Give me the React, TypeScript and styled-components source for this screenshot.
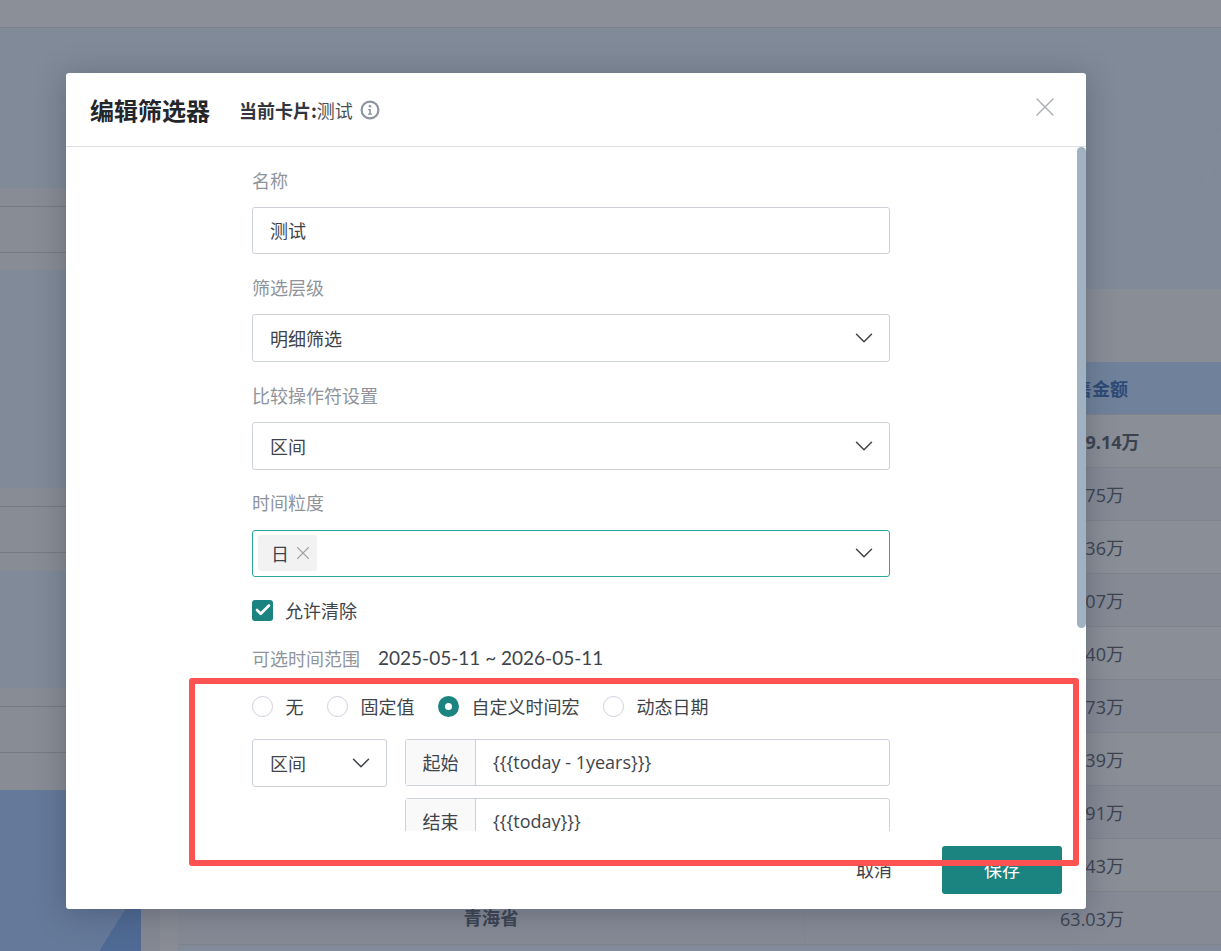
import styled, { createGlobalStyle } from "styled-components";
import { X, ChevronDown, Check } from "lucide-react";

const GlobalStyle = createGlobalStyle`
  html, body {
    margin: 0;
    padding: 0;
    height: 100%;
    overflow: hidden;
    font-family: "Noto Sans CJK SC", "Open Sans", sans-serif;
  }
`;

const rows = [
  { amount: "11739.14万", bold: true },
  { amount: "98.75万" },
  { amount: "86.36万" },
  { amount: "85.07万" },
  { amount: "80.40万" },
  { amount: "76.73万" },
  { amount: "70.39万" },
  { amount: "68.91万" },
  { amount: "65.43万" },
  { amount: "63.03万", province: "青海省" },
];

const Page = styled.div`
  position: relative;
  width: 1221px;
  height: 951px;
  overflow: hidden;
  background: #808a98;
  display: flex;
  flex-direction: column;
`;

const TopBar = styled.div`
  height: 27px;
  flex: none;
  background: #8b8f98;
  border-bottom: 1px solid #7d818a;
`;

const Backdrop = styled.div`
  flex: 1;
  display: flex;
  min-height: 0;
`;

const LeftSide = styled.div`
  width: 141px;
  flex: none;
  display: flex;
  flex-direction: column;
`;

const Band = styled.div<{ $top: number; $height: number }>`
  height: ${(p) => p.$height}px;
  flex: none;
  box-sizing: border-box;
  margin-top: ${(p) => p.$top}px;
  padding-top: 18px;
  background: #888c94;
`;

const BandRow = styled.div`
  height: 47px;
  box-sizing: border-box;
  border-top: 1px solid #767a83;
  border-bottom: 1px solid #767a83;
`;

const LeftChart = styled.div`
  flex: 1;
  background: linear-gradient(122deg, #65799a 0 82.7%, #4f6a94 82.7%);
`;

const Gutter = styled.div`
  width: 37px;
  flex: none;
  background: linear-gradient(90deg, #848892 0 19px, #898c94 19px);
  margin-top: 861px;
`;

const MainSide = styled.div`
  position: relative;
  flex: 1;
  display: flex;
  flex-direction: column;
  padding-top: 261px;
`;

const ChartLine = styled.svg`
  position: absolute;
  right: 0;
  top: 80px;
`;

const TableTitle = styled.div`
  height: 73px;
  flex: none;
  background: #898d96;
`;

const TableRow = styled.div<{ $head?: boolean; $shade?: boolean }>`
  height: 53px;
  flex: none;
  box-sizing: border-box;
  display: grid;
  grid-template-columns: 627px 158px 258px;
  align-items: center;
  text-align: center;
  font-family: "Open Sans", "Noto Sans CJK SC", sans-serif;
  font-size: 18px;
  color: ${(p) => (p.$head ? "#2e4a75" : "#3c4350")};
  font-weight: ${(p) => (p.$head ? 700 : 400)};
  background: ${(p) => (p.$head ? "#70829b" : p.$shade ? "#858a95" : "#8a8e97")};
  border-bottom: 1px solid #7f838c;
  white-space: nowrap;
`;

const ProvinceCell = styled.div`
  font-size: 18.4px;
  font-weight: 700;
  border-right: 1px solid #82868f;
  line-height: 52px;
`;

const AmountCell = styled.div<{ $bold?: boolean }>`
  grid-column: 3;
  font-weight: ${(p) => (p.$bold ? 700 : "inherit")};
`;

const Modal = styled.div`
  position: absolute;
  left: 66px;
  top: 73px;
  width: 1020px;
  height: 836px;
  background: #fff;
  border-radius: 3px;
  box-shadow: 0 4px 30px rgba(40, 50, 70, 0.35);
  display: flex;
  flex-direction: column;
  overflow: hidden;
`;

const ModalHeader = styled.div`
  height: 74px;
  flex: none;
  box-sizing: border-box;
  border-bottom: 1px solid #dcdfe6;
  padding: 0 24px;
  display: flex;
  align-items: center;
`;

const Title = styled.div`
  font-size: 24px;
  font-weight: 700;
  color: #23262b;
`;

const CardLabel = styled.div`
  margin-left: 29px;
  font-size: 18px;
  font-weight: 700;
  color: #33373d;
`;

const CardName = styled.span`
  font-weight: 400;
  color: #4a4f57;
`;

const InfoMark = styled.svg`
  margin-left: 7px;
  flex: none;
`;

const CloseMark = styled(X)`
  margin-left: auto;
  margin-top: -5px;
  margin-right: 1px;
  color: #aaadb2;
`;

const ModalBody = styled.div`
  position: relative;
  height: 684px;
  flex: none;
  box-sizing: border-box;
  overflow: hidden;
  padding: 21.5px 196px 0 186px;
`;

const ScrollThumb = styled.div`
  position: absolute;
  right: 0;
  top: 0;
  width: 9px;
  height: 481px;
  border-radius: 5px;
  background: #a2b1c1;
`;

const Label = styled.div`
  font-size: 18px;
  line-height: 22px;
  color: #8f949c;
  margin-bottom: 16.1px;
`;

const Field = styled.div<{ $active?: boolean }>`
  box-sizing: border-box;
  height: 47.6px;
  padding: 0 17px;
  border: 1px solid ${(p) => (p.$active ? "#2aa79c" : "#cdd1dc")};
  border-radius: 3px;
  display: flex;
  align-items: center;
  justify-content: space-between;
  font-size: 18px;
  color: #3f444b;
  margin-bottom: 21.97px;
`;

const TagField = styled(Field)`
  padding: 0 17px 0 5px;
  margin-bottom: 20.3px;
`;

const Tag = styled.div`
  height: 36px;
  width: 59px;
  box-sizing: border-box;
  padding-left: 13px;
  border-radius: 3px;
  background: #f2f2f3;
  display: flex;
  align-items: center;
`;

const TagClose = styled(X)`
  color: #a0a3a8;
  flex: none;
  margin-left: 3px;
  margin-right: -10px;
`;

const Chevron = styled(ChevronDown)`
  color: #3f444b;
  flex: none;
  margin-right: -6.5px;
`;

const CheckRow = styled.div`
  display: flex;
  align-items: center;
  gap: 12px;
  height: 26px;
  font-size: 18px;
  color: #3f444b;
  margin-bottom: 22.5px;
`;

const CheckBox = styled.div`
  width: 21px;
  height: 21px;
  border-radius: 3px;
  background: #1b8480;
  color: #fff;
  display: flex;
  align-items: center;
  justify-content: center;
`;

const RangeRow = styled.div`
  display: flex;
  align-items: center;
  gap: 18px;
  height: 24px;
  font-size: 18px;
  color: #8f949c;
  margin-bottom: 24.5px;
`;

const RangeValue = styled.span`
  font-family: "Lato", "Noto Sans CJK SC", sans-serif;
  font-size: 19px;
  color: #3f444b;
`;

const RadioRow = styled.div`
  display: flex;
  align-items: center;
  height: 24px;
  font-size: 18px;
  color: #3f444b;
  margin-bottom: 20.5px;
`;

const RadioItem = styled.div`
  display: flex;
  align-items: center;
  gap: 12.5px;
  margin-right: 23.5px;
`;

const Radio = styled.div<{ $on?: boolean }>`
  width: 21px;
  height: 21px;
  box-sizing: border-box;
  border-radius: 50%;
  ${(p) =>
    p.$on
      ? "background: #1b8480; display: flex; align-items: center; justify-content: center;"
      : "border: 1px solid #cdd1dc;"}
`;

const RadioDot = styled.div`
  width: 7px;
  height: 7px;
  border-radius: 50%;
  background: #fff;
`;

const MacroRow = styled.div`
  display: flex;
  gap: 18px;
  align-items: flex-start;
`;

const OperatorSelect = styled(Field)`
  width: 135px;
  flex: none;
  height: 48px;
  margin-bottom: 0;
`;

const MacroInputs = styled.div`
  flex: 1;
  display: flex;
  flex-direction: column;
  gap: 12px;
`;

const AddonInput = styled.div`
  height: 47px;
  box-sizing: border-box;
  flex: none;
  border: 1px solid #cdd1dc;
  border-radius: 3px;
  display: flex;
  font-size: 18px;
  color: #3f444b;
`;

const Addon = styled.div`
  width: 70px;
  flex: none;
  box-sizing: border-box;
  background: #f9f9fa;
  border-right: 1px solid #cdd1dc;
  display: flex;
  align-items: center;
  justify-content: center;
`;

const AddonValue = styled.div`
  flex: 1;
  padding-left: 17px;
  display: flex;
  align-items: center;
  font-family: "Open Sans", "Noto Sans CJK SC", sans-serif;
`;

const ModalFooter = styled.div`
  flex: 1;
  display: flex;
  align-items: center;
  justify-content: flex-end;
  gap: 50px;
  padding-right: 24px;
  font-size: 18px;
`;

const CancelButton = styled.div`
  color: #3f444b;
  margin-top: -2px;
`;

const SaveButton = styled.div`
  width: 120px;
  height: 48px;
  box-sizing: border-box;
  padding-bottom: 2px;
  border-radius: 3px;
  background: #1b8480;
  color: #fff;
  display: flex;
  align-items: center;
  justify-content: center;
`;

const Highlight = styled.div`
  position: absolute;
  left: 189px;
  top: 678px;
  width: 890px;
  height: 188px;
  box-sizing: border-box;
  border: 6px solid #fd5252;
  border-radius: 3px;
`;

const SelectChevron = () => <Chevron size={30} strokeWidth={1.2} />;

export default function App() {
  return (
    <Page>
      <GlobalStyle />
      <TopBar />
      <Backdrop>
        <LeftSide>
          <Band $top={160} $height={82}>
            <BandRow />
          </Band>
          <Band $top={218} $height={83}>
            <BandRow />
          </Band>
          <Band $top={117} $height={102}>
            <BandRow />
          </Band>
          <LeftChart />
        </LeftSide>
        <Gutter />
        <MainSide>
          <ChartLine width="40" height="100" viewBox="0 0 40 100" fill="none">
            <path d="M40 25 Q30 50 24 85" stroke="#848d9b" strokeWidth="1" />
          </ChartLine>
          <TableTitle />
          <TableRow $head>
            <AmountCell>销售金额</AmountCell>
          </TableRow>
          {rows.map((r, i) => (
            <TableRow key={r.amount} $shade={i % 2 === 1}>
              {r.province && <ProvinceCell>{r.province}</ProvinceCell>}
              <AmountCell $bold={r.bold}>{r.amount}</AmountCell>
            </TableRow>
          ))}
        </MainSide>
      </Backdrop>
      <Modal>
        <ModalHeader>
          <Title>编辑筛选器</Title>
          <CardLabel>
            当前卡片:<CardName>测试</CardName>
          </CardLabel>
          <InfoMark width="20" height="20" viewBox="0 0 20 20" fill="none">
            <circle cx="10" cy="10" r="8.4" stroke="#8e94a0" strokeWidth="2.2" />
            <circle cx="10" cy="6.2" r="1.3" fill="#8e94a0" />
            <path d="M8.2 9h2.6v4.6h1.2v1.2H8v-1.2h1.2V10.2h-1z" fill="#8e94a0" />
          </InfoMark>
          <CloseMark size={32} strokeWidth={1.05} />
        </ModalHeader>
        <ModalBody>
          <ScrollThumb />
          <Label>名称</Label>
          <Field>测试</Field>
          <Label>筛选层级</Label>
          <Field>
            明细筛选
            <SelectChevron />
          </Field>
          <Label>比较操作符设置</Label>
          <Field>
            区间
            <SelectChevron />
          </Field>
          <Label>时间粒度</Label>
          <TagField $active>
            <Tag>
              日
              <TagClose size={22} strokeWidth={1.2} />
            </Tag>
            <SelectChevron />
          </TagField>
          <CheckRow>
            <CheckBox>
              <Check size={18} strokeWidth={3.5} />
            </CheckBox>
            允许清除
          </CheckRow>
          <RangeRow>
            可选时间范围
            <RangeValue>2025-05-11 ~ 2026-05-11</RangeValue>
          </RangeRow>
          <RadioRow>
            <RadioItem>
              <Radio />无
            </RadioItem>
            <RadioItem>
              <Radio />固定值
            </RadioItem>
            <RadioItem>
              <Radio $on>
                <RadioDot />
              </Radio>
              自定义时间宏
            </RadioItem>
            <RadioItem>
              <Radio />动态日期
            </RadioItem>
          </RadioRow>
          <MacroRow>
            <OperatorSelect>
              区间
              <SelectChevron />
            </OperatorSelect>
            <MacroInputs>
              <AddonInput>
                <Addon>起始</Addon>
                <AddonValue>{"{{{today - 1years}}}"}</AddonValue>
              </AddonInput>
              <AddonInput>
                <Addon>结束</Addon>
                <AddonValue>{"{{{today}}}"}</AddonValue>
              </AddonInput>
            </MacroInputs>
          </MacroRow>
        </ModalBody>
        <ModalFooter>
          <CancelButton>取消</CancelButton>
          <SaveButton>保存</SaveButton>
        </ModalFooter>
      </Modal>
      <Highlight />
    </Page>
  );
}
